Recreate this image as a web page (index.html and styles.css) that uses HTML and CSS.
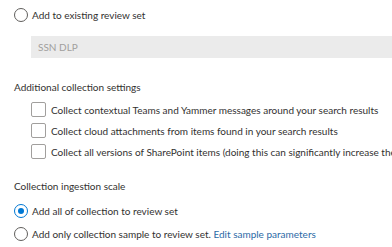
FILE: index.html
```html
<!DOCTYPE html>
<html lang="en">
  <head>
    <meta charset="UTF-8" />
    <meta name="viewport" content="width=device-width, initial-scale=1.0" />
    <title>Review set options</title>
    <link rel="stylesheet" href="styles.css">
  </head>
  <body>
    <div class="panel">
      <label class="radio-row first">
        <span class="radio"></span>
        <span>Add to existing review set</span>
      </label>
      <div class="field">SSN DLP</div>

      <h3 class="section-title settings">Additional collection settings</h3>
      <ul class="checks">
        <li><span class="box"></span>Collect contextual Teams and Yammer messages around your search results</li>
        <li><span class="box"></span>Collect cloud attachments from items found in your search results</li>
        <li><span class="box"></span>Collect all versions of SharePoint items (doing this can significantly increase the size of the collection)</li>
      </ul>

      <h3 class="section-title scale">Collection ingestion scale</h3>
      <div class="radios">
        <label class="radio-row">
          <span class="radio checked"></span>
          <span>Add all of collection to review set</span>
        </label>
        <label class="radio-row">
          <span class="radio"></span>
          <span>Add only collection sample to review set. <a href="#">Edit sample parameters</a></span>
        </label>
      </div>
    </div>
  </body>
</html>
```

FILE: styles.css
```css
* {
  box-sizing: border-box;
}
html,
body {
  margin: 0;
  background: #ffffff;
  overflow: hidden;
}
body {
  font-family: Lato, "Open Sans", sans-serif;
  font-size: 10px;
  color: #323130;
  white-space: nowrap;
}
.panel {
  padding: 5px 0 0 14px;
}
.radio-row {
  display: flex;
  align-items: center;
  gap: 4px;
  height: 20px;
}
.radio {
  flex: none;
  width: 14px;
  height: 14px;
  border: 1px solid #605e5c;
  border-radius: 50%;
  position: relative;
}
.radio.checked {
  border-color: #0078d4;
}
.radio.checked::after {
  content: "";
  position: absolute;
  left: 3px;
  top: 3px;
  width: 6px;
  height: 6px;
  border-radius: 50%;
  background: #0078d4;
}
.field {
  margin: 11px 0 0 17px;
  height: 22px;
  line-height: 22px;
  padding-left: 7px;
  background: #ebebeb;
  color: #a19f9d;
}
.section-title {
  margin: 0;
  font-size: 10px;
  font-weight: 400;
  line-height: 18px;
  height: 18px;
}
.settings {
  margin-top: 20px;
}
.checks {
  list-style: none;
  margin: 3px 0 0 0;
  padding: 0 0 0 17px;
}
.checks li {
  display: flex;
  align-items: center;
  gap: 5px;
  height: 21px;
}
.box {
  flex: none;
  width: 15px;
  height: 15px;
  border: 1px solid #a19f9d;
  border-radius: 2px;
}
.scale {
  margin-top: 15px;
}
.radios {
  margin-top: 4px;
}
.radios .radio-row {
  height: 23px;
}
a {
  color: #2b6aa6;
  text-decoration: none;
}
```
